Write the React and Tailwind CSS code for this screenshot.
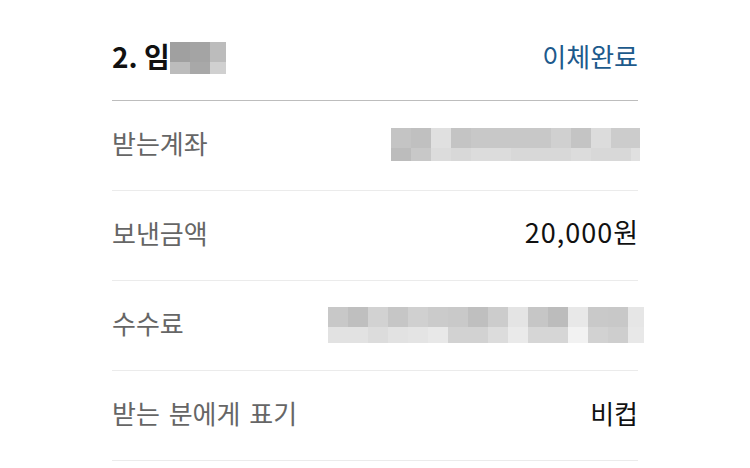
const NAME_BLUR = [
  ["#a0a0a0", "#a4a4a4", "#bcbcbc"],
  ["#bcbcbc", "#a8a8a8", "#d0d0d0"],
];

const ACCOUNT_BLUR = [
  ["#c4c4c4", "#c0c0c0", "#e0e0e0", "#c4c4c4", "#c8c8c8", "#c8c8c8", "#c8c8c8", "#c8c8c8", "#d0d0d0", "#c4c4c4", "#dcdcdc", "#cccccc", "#cccccc"],
  ["#bcbcbc", "#c8c8c8", "#dcdcdc", "#d8d8d8", "#dcdcdc", "#dcdcdc", "#d8d8d8", "#d8d8d8", "#d8d8d8", "#dcdcdc", "#d8d8d8", "#d8d8d8", "#e0e0e0"],
];

const FEE_BLUR = [
  ["#c8c8c8", "#bfbfbf", "#d2d2d2", "#c6c6c6", "#d0d0d0", "#cbcbcb", "#c9c9c9", "#bfbfbf", "#cccccc", "#e4e4e4", "#c6c6c6", "#bcbcbc", "#e8e8e8", "#c9c9c9", "#c8c8c8", "#e6e6e6"],
  ["#e2e2e2", "#e2e2e2", "#dcdcdc", "#e2e2e2", "#e4e4e4", "#e8e8e8", "#d2d2d2", "#d2d2d2", "#dcdcdc", "#eaeaea", "#d6d6d6", "#d6d6d6", "#f2f2f2", "#d2d2d2", "#cecece", "#e8e8e8"],
];

// mosaic used to hide private info
function Mosaic({ grid, widths, heights }) {
  return (
    <div className="flex flex-col">
      {grid.map((row, r) => (
        <div key={r} className="flex">
          {row.map((c, i) => (
            <div
              key={i}
              style={{ background: c, width: widths[i] ?? 20, height: heights[r] }}
            />
          ))}
        </div>
      ))}
    </div>
  );
}

function Row({ label, children }) {
  return (
    <div className="flex h-[90px] items-center justify-between border-b border-[#ebebeb] pb-[6px]">
      <span className="text-[26px] text-[#666666] [word-spacing:3px]">{label}</span>
      {children}
    </div>
  );
}

export default function App() {
  return (
    <div className="min-h-[468px] bg-white pt-[11px] font-['Noto_Sans_CJK_KR','Noto_Sans',sans-serif]">
      <div className="mx-auto w-[526px]">
        <div className="flex h-[90px] items-center justify-between border-b border-[#bdbdbd]">
          <div className="flex items-center">
            <span className="text-[28px] font-bold text-[#111111]">2. 임</span>
            <div className="mt-[4px]">
              <Mosaic grid={NAME_BLUR} widths={[20, 20, 16]} heights={[20, 12]} />
            </div>
          </div>
          <span className="text-[26px] text-[#1d5a8c]">이체완료</span>
        </div>

        <Row label="받는계좌">
          <div className="-mr-[2px] mt-[4px]">
            <Mosaic
              grid={ACCOUNT_BLUR}
              widths={[20, 20, 20, 20, 20, 20, 20, 20, 20, 20, 20, 20, 9]}
              heights={[20, 13]}
            />
          </div>
        </Row>

        <Row label="보낸금액">
          <span className="text-[27px] text-[#111111]">
            <span className="tracking-[1px]">20,000</span>원
          </span>
        </Row>

        <Row label="수수료">
          <div className="-mr-[6px] mt-[4px]">
            <Mosaic
              grid={FEE_BLUR}
              widths={[20, 20, 20, 20, 20, 20, 20, 20, 20, 20, 20, 20, 20, 20, 20, 16]}
              heights={[20, 16]}
            />
          </div>
        </Row>

        <Row label="받는 분에게 표기">
          <span className="text-[26px] text-[#111111]">비컵</span>
        </Row>
      </div>
    </div>
  );
}
